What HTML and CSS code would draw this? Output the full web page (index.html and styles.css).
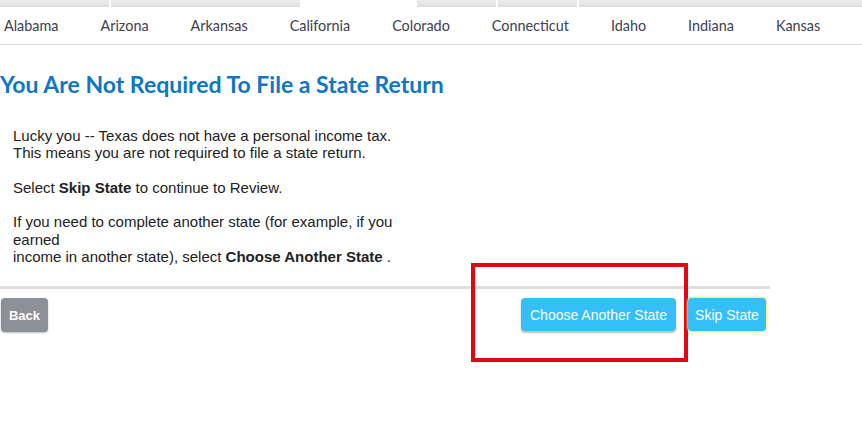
FILE: index.html
```html
<!DOCTYPE html>
<html>
<head>
<meta charset="utf-8">
<link rel="stylesheet" href="styles.css">
</head>
<body>
<div class="strip">
  <div class="seg s1"></div>
  <div class="seg s2"></div>
  <div class="seg active"></div>
  <div class="seg s4"></div>
  <div class="seg s5"></div>
  <div class="seg s6"></div>
</div>
<nav class="states">
  <span>Alabama</span>
  <span>Arizona</span>
  <span>Arkansas</span>
  <span>California</span>
  <span>Colorado</span>
  <span>Connecticut</span>
  <span>Idaho</span>
  <span>Indiana</span>
  <span>Kansas</span>
  <span class="cut">K</span>
</nav>
<main class="content">
  <h1 class="title">You Are Not Required To File a State Return</h1>
  <p class="body">Lucky you -- Texas does not have a personal income tax.<br>
This means you are not required to file a state return.<br><br>
Select <b>Skip State</b> to continue to Review.<br><br>
If you need to complete another state (for example, if you<br>earned<br>
income in another state), select <b>Choose Another State</b> .</p>
  <div class="rule"></div>
  <div class="actions">
    <button class="btn back">Back</button>
    <div class="right">
      <div class="highlight">
        <button class="btn primary">Choose Another State</button>
      </div>
      <button class="btn primary skip">Skip State</button>
    </div>
  </div>
</main>
</body>
</html>
```

FILE: styles.css
```css
html, body {
  margin: 0;
  padding: 0;
  background: #fff;
}
body {
  width: 862px;
  height: 438px;
  overflow: hidden;
  font-family: "Liberation Sans", Arial, sans-serif;
}
.strip {
  display: flex;
  height: 7px;
  gap: 2px;
}
.seg {
  height: 7px;
  background: linear-gradient(#ececec, #e4e4e4 70%, #dadada);
}
.s1 { width: 109px; }
.s2 { width: 189px; }
.active { width: 113px; background: #fff; }
.s4 { width: 79px; }
.s5 { width: 79px; }
.s6 { flex: 1; }
.states {
  display: flex;
  gap: 42px;
  padding-left: 4px;
  height: 37px;
  align-items: center;
  border-bottom: 1px solid #dcdcdc;
  font-family: Lato, "Noto Sans", sans-serif;
  font-size: 14.4px;
  color: #3d4150;
  white-space: nowrap;
  overflow: hidden;
}
.states .cut { color: #f0a060; }
.content {
  width: 770px;
}
.title {
  margin: 27px 0 0 0;
  font-family: Lato, "Noto Sans", sans-serif;
  font-weight: 700;
  font-size: 23px;
  line-height: 24px;
  color: #0d77c4;
}
.body {
  margin: 31px 0 0 13px;
  font-size: 15px;
  line-height: 17.3px;
  color: #222;
}
.rule {
  margin-top: 21px;
  height: 3px;
  background: #dedede;
}
.actions {
  display: flex;
  justify-content: space-between;
  align-items: flex-start;
  margin-top: 9px;
}
.btn {
  border: none;
  border-radius: 4px;
  color: #fff;
  font-family: "Liberation Sans", Arial, sans-serif;
  font-size: 14px;
  height: 33px;
  padding: 0 9px;
  cursor: pointer;
}
.back {
  margin-left: 1px;
  width: 47px;
  height: 34px;
  padding: 0;
  background: #8d9097;
  font-weight: 700;
  font-size: 13px;
  box-shadow: 0 1px 2px rgba(0,0,0,0.25);
}
.right {
  display: flex;
  align-items: flex-start;
  margin-right: 4px;
}
.highlight {
  position: relative;
  padding-right: 12px;
}
.highlight::before {
  content: "";
  position: absolute;
  left: -50px;
  top: -35px;
  width: 209px;
  height: 91px;
  border: 4px solid #e30613;
}
.primary {
  position: relative;
  background: #35bff8;
  box-shadow: 0 2px 2px rgba(0,0,0,0.25);
  width: 155px;
}
.skip {
  width: 78px;
  padding: 0;
  box-shadow: 0 0 2px 1px #f4e64a;
}
```
